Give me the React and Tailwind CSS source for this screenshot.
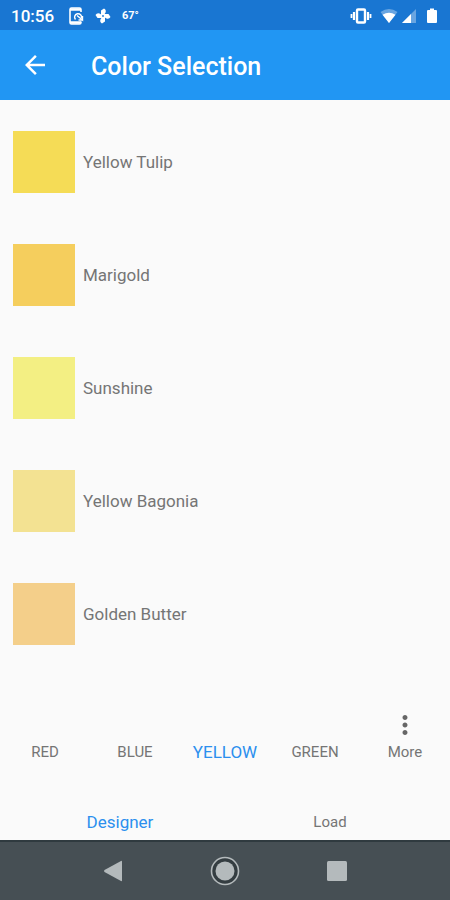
import React, { useState } from 'react';
import { MdArrowBack, MdMoreVert } from 'react-icons/md';

const colors = [
  { name: 'Yellow Tulip', swatch: 'bg-[#f5dc56]' },
  { name: 'Marigold', swatch: 'bg-[#f5ce5d]' },
  { name: 'Sunshine', swatch: 'bg-[#f3ef83]' },
  { name: 'Yellow Bagonia', swatch: 'bg-[#f3e292]' },
  { name: 'Golden Butter', swatch: 'bg-[#f4cf8a]' },
];

const families = ['RED', 'BLUE', 'YELLOW', 'GREEN'];

function StatusBar() {
  return (
    <div className="flex h-[30px] items-center justify-between bg-[#1976d2] pt-[2px] pr-3 pl-[11px] text-white">
      <div className="flex items-center">
        <span className="w-[45px] text-[17px] leading-5 font-medium">10:56</span>
        <svg className="ml-3 h-[18px] w-4" viewBox="0 0 16 18" fill="none" stroke="currentColor">
          <path d="M13 5V2.500Q13 1 11.500 1H3.500Q2 1 2 2.500V15.500Q2 17 3.500 17H11.500Q13 17 13 15.500V14.500" strokeWidth="1.600" />
          <path d="M2 2.500H13M2 15.500H13" strokeWidth="2.400" />
          <path d="M7.500 12.500A3.500 3.500 0 1 1 13.500 11" strokeWidth="1.500" />
          <path d="M9 8.500L14.500 13V9M14.500 13H10.500" strokeWidth="1.400" />
        </svg>
        <svg className="ml-[11px] h-4 w-4" viewBox="0 0 16 16" fill="currentColor">
          <path d="M6 7V2.500L9 0.500Q11.500 2 10.500 4.500L9 7Z" />
          <path d="M9 6H13.500L15.500 9Q14 11.500 11.500 10.500L9 9Z" />
          <path d="M10 9V13.500L7 15.500Q4.500 14 5.500 11.500L7 9Z" />
          <path d="M7 10H2.500L0.500 7Q2 4.500 4.500 5.500L7 7Z" />
          <circle cx="8" cy="8" r="2.500" />
          <circle cx="8" cy="8" r="0.900" fill="#1976d2" />
        </svg>
        <span className="ml-[11px] text-[11px] leading-4 font-bold">67°</span>
      </div>
      <div className="flex items-center">
        <svg className="h-4 w-[22px]" viewBox="0 0 22 16" fill="none" stroke="currentColor">
          <rect x="7" y="1.500" width="8" height="13" rx="1" strokeWidth="2.400" />
          <path d="M4 4V12M18 4V12" strokeWidth="2.200" />
          <path d="M1.500 6V10M20.500 6V10" strokeWidth="1.800" />
        </svg>
        <svg className="ml-2 h-4 w-[18px]" viewBox="0 0 18 16" fill="currentColor">
          <path d="M0.500 4Q9 -2 17.500 4L9 15Z" opacity="0.35" />
          <path d="M2.500 6.800Q9 2.500 15.500 6.800L9 15Z" />
        </svg>
        <svg className="ml-1 h-4 w-[14px]" viewBox="0 0 14 16" fill="currentColor">
          <path d="M14 1V15H0Z" opacity="0.35" />
          <path d="M9 6V15H0Z" />
        </svg>
        <svg className="ml-[10px] h-4 w-3" viewBox="0 0 12 16" fill="currentColor">
          <path d="M4 0.500H8V2H10Q11 2 11 3V14Q11 15 10 15H2Q1 15 1 14V3Q1 2 2 2H4Z" />
        </svg>
      </div>
    </div>
  );
}

function SystemNav() {
  return (
    <div className="flex h-[60px] justify-center border-t-2 border-[#2f3a3f] bg-[#464f54] text-[#b4babc]">
      <button type="button" aria-label="Back" className="flex w-28 items-center justify-center">
        <svg className="h-[22px] w-5" viewBox="0 0 20 22" fill="currentColor">
          <path d="M18 1Q19 0.500 19 1.500V20.500Q19 21.500 18 21L1.500 12Q0.500 11 1.500 10Z" />
        </svg>
      </button>
      <button type="button" aria-label="Home" className="flex w-28 items-center justify-center">
        <svg className="h-[30px] w-[30px]" viewBox="0 0 30 30">
          <circle cx="15" cy="15" r="13.500" fill="#343d41" stroke="currentColor" strokeWidth="1.600" />
          <circle cx="15" cy="15" r="9.500" fill="currentColor" />
        </svg>
      </button>
      <button type="button" aria-label="Recent apps" className="flex w-28 items-center justify-center">
        <svg className="h-5 w-5" viewBox="0 0 20 20" fill="currentColor">
          <rect width="20" height="20" rx="1.500" />
        </svg>
      </button>
    </div>
  );
}

export default function ColorSelection() {
  const [family, setFamily] = useState('YELLOW');
  const [mode, setMode] = useState('Designer');

  return (
    <div className="flex min-h-screen flex-col bg-[#fafafa] font-[Roboto,sans-serif] text-[#757575]">
      <StatusBar />
      <header className="flex h-[70px] items-center bg-[#2196f3] px-5 text-white">
        <button type="button" aria-label="Back" className="flex w-[71px]">
          <MdArrowBack className="h-[30px] w-[30px]" />
        </button>
        <h1 className="pt-1 text-[25px] leading-8 font-medium">Color Selection</h1>
      </header>

      <main className="flex-1 px-[13px] pt-[31px]">
        <ul className="space-y-[51px]">
          {colors.map((color) => (
            <li key={color.name} className="flex items-center gap-2">
              <div className={`h-[62px] w-[62px] ${color.swatch}`} />
              <span className="text-[17px] leading-6">{color.name}</span>
            </li>
          ))}
        </ul>
      </main>

      <nav className="grid grid-cols-5 items-end">
        {families.map((name) => (
          <button
            key={name}
            type="button"
            onClick={() => setFamily(name)}
            className={name === family ? 'text-[17px] leading-5 text-[#2b8fee]' : 'text-[15px] leading-5'}
          >
            {name}
          </button>
        ))}
        <button type="button" className="flex flex-col items-center gap-[2px] text-[15px] leading-5">
          <MdMoreVert className="h-[30px] w-[30px] text-[#666]" />
          More
        </button>
      </nav>

      <nav className="grid grid-cols-2 px-[15px] pt-[50px] pb-2">
        {['Designer', 'Load'].map((name) => (
          <button
            key={name}
            type="button"
            onClick={() => setMode(name)}
            className={name === mode ? 'text-[17px] leading-5 text-[#2b8fee]' : 'text-[15px] leading-5'}
          >
            {name}
          </button>
        ))}
      </nav>
      <SystemNav />
    </div>
  );
}
